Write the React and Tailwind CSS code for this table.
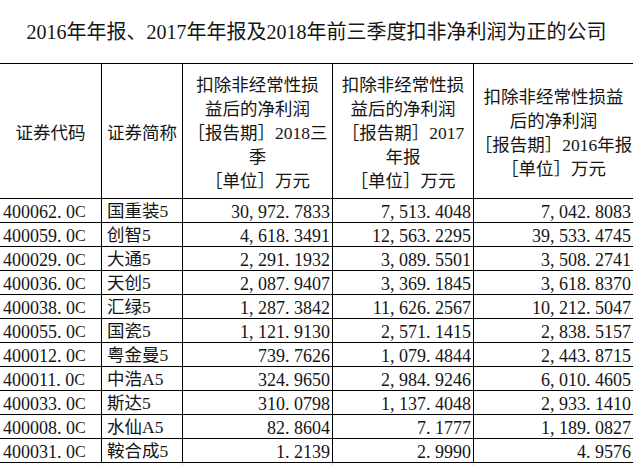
import React from "react";

const rows = [
  ["400062.0C", "国重装5", "30,972.7833", "7,513.4048", "7,042.8083"],
  ["400059.0C", "创智5", "4,618.3491", "12,563.2295", "39,533.4745"],
  ["400029.0C", "大通5", "2,291.1932", "3,089.5501", "3,508.2741"],
  ["400036.0C", "天创5", "2,087.9407", "3,369.1845", "3,618.8370"],
  ["400038.0C", "汇绿5", "1,287.3842", "11,626.2567", "10,212.5047"],
  ["400055.0C", "国瓷5", "1,121.9130", "2,571.1415", "2,838.5157"],
  ["400012.0C", "粤金曼5", "739.7626", "1,079.4844", "2,443.8715"],
  ["400011.0C", "中浩A5", "324.9650", "2,984.9246", "6,010.4605"],
  ["400033.0C", "斯达5", "310.0798", "1,137.4048", "2,933.1410"],
  ["400008.0C", "水仙A5", "82.8604", "7.1777", "1,189.0827"],
  ["400031.0C", "鞍合成5", "1.2139", "2.9990", "4.9576"],
];

function Mono({ s }) {
  return (
    <>
      {s.split("").map((c, i) =>
        c === "," || c === "." ? (
          <span key={i} className="inline-block w-[9px] text-left">
            {c}
          </span>
        ) : c === "C" ? (
          <span key={i} className="inline-block w-[9px] text-[16px]">
            {c}
          </span>
        ) : (
          <React.Fragment key={i}>{c}</React.Fragment>
        )
      )}
    </>
  );
}

const font = "font-['Liberation_Serif','Noto_Sans_CJK_SC',serif]";

export default function App() {
  return (
    <div className={`w-[633px] h-[465px] overflow-hidden bg-white text-[#151515] ${font}`}>
      <div className="h-[63px] flex items-center justify-center text-[20px] leading-none pt-[1px] whitespace-nowrap">
        2016年年报、2017年年报及2018年前三季度扣非净利润为正的公司
      </div>
      <div className="grid grid-cols-[102px_81px_150px_141px_1fr] border-t border-black">
        {/* header */}
        <div className="h-[135px] border-r border-b border-black flex items-center justify-center text-[17.5px] leading-[24px] pt-[4px]">
          证券代码
        </div>
        <div className="h-[135px] border-r border-b border-black flex items-center justify-center text-[17.5px] leading-[24px] pt-[4px] whitespace-nowrap">
          证券简称
        </div>
        <div className="h-[135px] border-r border-b border-black flex items-center justify-center text-center text-[17.5px] leading-[24px] pt-[3px] whitespace-nowrap">
          <div>
            扣除非经常性损
            <br />
            益后的净利润
            <br />
            ［报告期］2018三
            <br />
            季
            <br />
            ［单位］万元
          </div>
        </div>
        <div className="h-[135px] border-r border-b border-black flex items-center justify-center text-center text-[17.5px] leading-[24px] pt-[3px] whitespace-nowrap">
          <div>
            扣除非经常性损
            <br />
            益后的净利润
            <br />
            ［报告期］2017
            <br />
            年报
            <br />
            ［单位］万元
          </div>
        </div>
        <div className="h-[135px] border-b border-black flex items-center justify-center text-center text-[17.5px] leading-[24px] pt-[3px] whitespace-nowrap">
          <div>
            扣除非经常性损益
            <br />
            后的净利润
            <br />
            ［报告期］2016年报
            <br />
            ［单位］万元
          </div>
        </div>
        {rows.map((r, i) => (
          <React.Fragment key={i}>
            <div className="h-[24px] border-r border-b border-black flex items-center pl-[3px] pt-[2px] text-[18px] leading-none whitespace-nowrap">
              <Mono s={r[0]} />
            </div>
            <div className="h-[24px] border-r border-b border-black flex items-center pl-[5px] pt-[2px] text-[17.5px] leading-none whitespace-nowrap">
              {r[1]}
            </div>
            <div className="h-[24px] border-r border-b border-black flex items-center justify-end pr-[2px] pt-[2px] text-[18px] leading-none whitespace-nowrap">
              <Mono s={r[2]} />
            </div>
            <div className="h-[24px] border-r border-b border-black flex items-center justify-end pr-[2px] pt-[2px] text-[18px] leading-none whitespace-nowrap">
              <Mono s={r[3]} />
            </div>
            <div className="h-[24px] border-b border-black flex items-center justify-end pr-[2px] pt-[2px] text-[18px] leading-none whitespace-nowrap">
              <Mono s={r[4]} />
            </div>
          </React.Fragment>
        ))}
        <div className="h-[4px] border-r border-[#d4d4d4]" />
        <div className="h-[4px] border-r border-[#d4d4d4]" />
        <div className="h-[4px] border-r border-[#d4d4d4]" />
        <div className="h-[4px] border-r border-[#d4d4d4]" />
        <div className="h-[4px]" />
      </div>
    </div>
  );
}
